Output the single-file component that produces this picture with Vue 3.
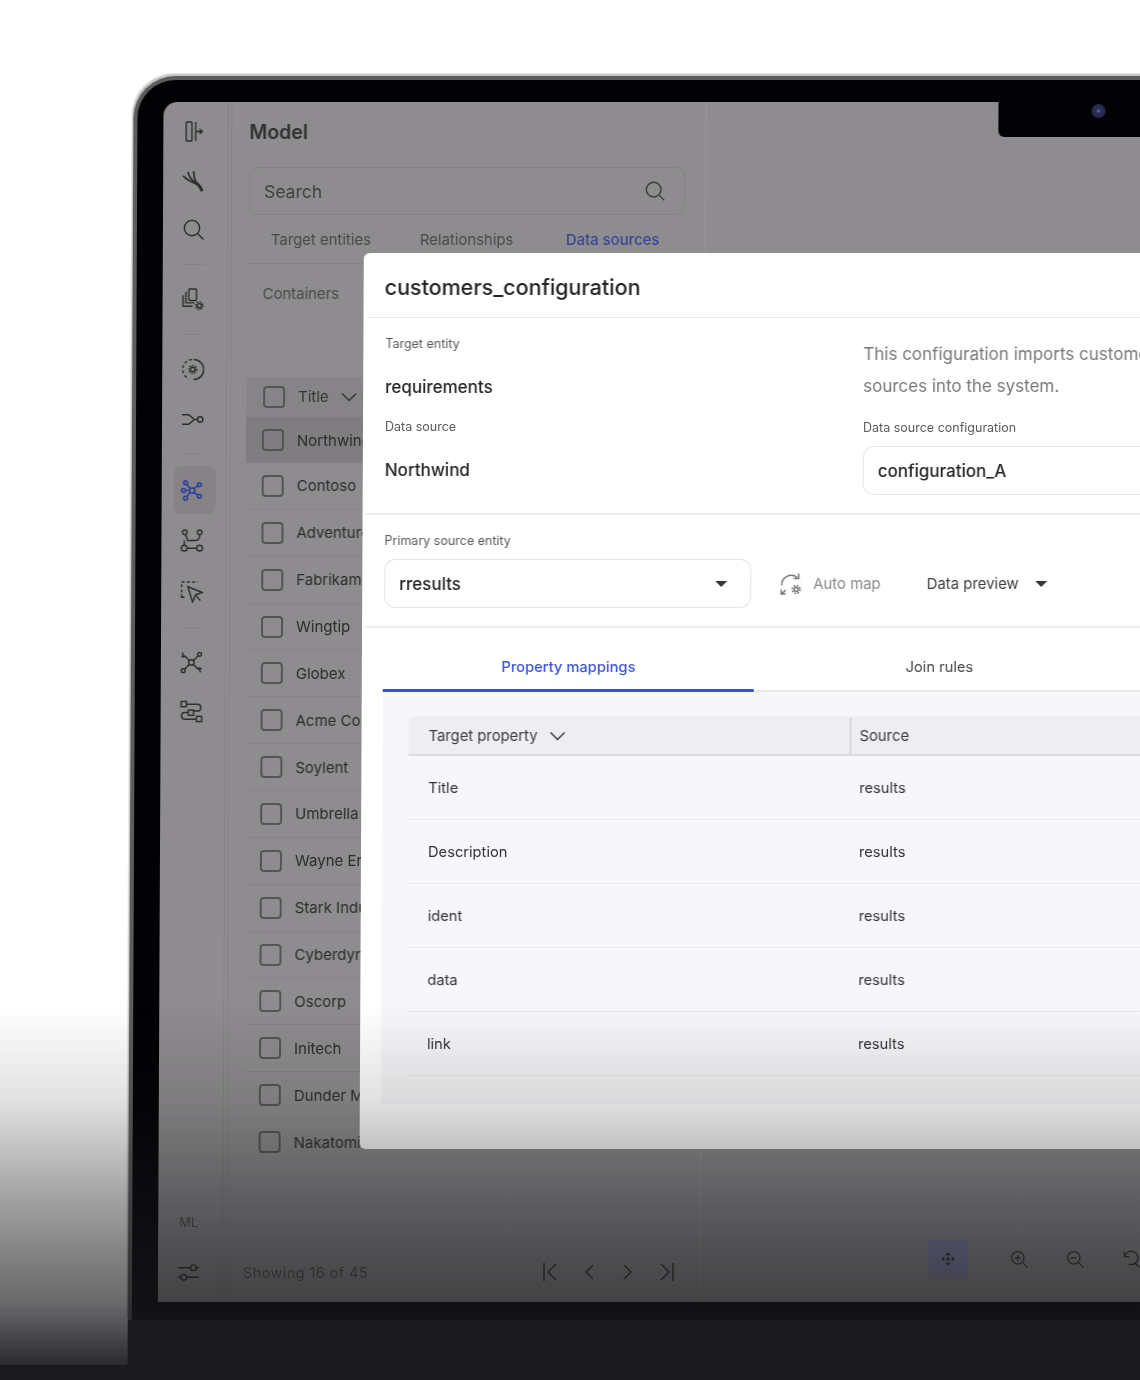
<script setup>
const companies = [
  'Northwind', 'Contoso', 'Adventure Works', 'Fabrikam', 'Wingtip', 'Globex', 'Acme Corp', 'Soylent',
  'Umbrella', 'Wayne Enterprises', 'Stark Industries', 'Cyberdyne', 'Oscorp', 'Initech', 'Dunder Mifflin', 'Nakatomi',
];
const mappings = ['Title', 'Description', 'ident', 'data', 'link'];
</script>

<template>
  <div class="page">
    <div class="laptop">
      <div class="bezel">
        <div class="screen">
          <aside class="rail">
            <div class="slot">
              <svg class="ico" viewBox="0 0 24 24"><rect x="4" y="2" width="6" height="20" rx="1" /><path d="M14 2v20M14 12h5" /><path class="solid" d="M18 8.500l4 3.500-4 3.500z" /></svg>
            </div>
            <div class="slot">
              <svg class="ico ico--fork" viewBox="0 0 24 24"><path d="M1 7c4 5 9 6 14 9M6 3c1 5 4 9 9 12M12 2c0 5 1 10 4 14" /><path class="heavy" d="M15 15c2 1 4 4 6 8" /></svg>
            </div>
            <div class="slot">
              <svg class="ico" viewBox="0 0 24 24"><circle cx="10.500" cy="10.500" r="8" /><path d="M16.500 16.500l6 6" /></svg>
            </div>
            <div class="sep" />
            <div class="slot">
              <svg class="ico" viewBox="0 0 24 24"><rect x="7.500" y="1" width="8" height="12" rx="1" /><path d="M4.500 4v11.500h9M1.500 7.500V19h10" /><circle cx="18.500" cy="18.500" r="2.200" /><circle class="teeth" cx="18.500" cy="18.500" r="3.800" /></svg>
            </div>
            <div class="sep" />
            <div class="slot">
              <svg class="ico" viewBox="0 0 24 24"><path stroke-dasharray="3 2.500" d="M11 1.500A10.500 10.500 0 0 0 8 21.700" /><path d="M13 1.500a10.500 10.500 0 0 1 0 21" /><circle cx="12" cy="12" r="2.400" /><circle class="teeth" cx="12" cy="12" r="4" /></svg>
            </div>
            <div class="slot slot--route">
              <svg class="ico" viewBox="0 0 24 24"><path d="M1 7h7l6 5-6 5H1M14 12h3" /><circle cx="20" cy="12" r="2.800" /></svg>
            </div>
            <div class="sep" />
            <div class="slot slot--wide slot--active">
              <svg class="ico ico--blue" viewBox="0 0 24 24"><rect x="9.500" y="9.500" width="5" height="5" /><path d="M9.500 9.500L6 5M14.500 9.500L18 7M14.500 14.500L18 17M9.500 14.500L6 19M9.500 12H5" /><circle cx="5" cy="4" r="2" /><circle cx="19.500" cy="6" r="2" /><circle cx="19.500" cy="18" r="2" /><circle cx="5" cy="20" r="2" /><circle cx="3" cy="12" r="2" /></svg>
            </div>
            <div class="slot slot--wide">
              <svg class="ico" viewBox="0 0 24 24"><circle cx="4.500" cy="3.500" r="2.400" /><circle cx="20" cy="3.500" r="2.400" /><circle cx="4" cy="20" r="3" /><circle cx="20" cy="20" r="3" /><path d="M5.500 6c1 3 2 6 2 6h8c3.500 0 4.500-3 4.500-6M4 12v5M7 20h10" /></svg>
            </div>
            <div class="slot slot--wide">
              <svg class="ico" viewBox="0 0 24 24"><path stroke-dasharray="3 2.500" d="M1.500 13V2h17" /><path d="M1.500 15v3h3" /><path d="M8 7l15 6-7 2.500L13 23z" /><path d="M16 15.500l5 6" /></svg>
            </div>
            <div class="sep" />
            <div class="slot">
              <svg class="ico" viewBox="0 0 24 24"><circle cx="12" cy="12" r="2.800" /><path d="M9.800 10L5 5M14.200 10L19 5M9.800 14L5 19M14.200 14L19 19" /><circle cx="20.500" cy="3.500" r="2" /><circle cx="3.500" cy="20.500" r="2" /><path d="M1.500 5a3 3 0 0 0 4 .5M3 1.500a3 3 0 0 0 2 4M22.500 19a3 3 0 0 0-4-.5M21 22.500a3 3 0 0 0-2-4" /></svg>
            </div>
            <div class="slot">
              <svg class="ico" viewBox="0 0 24 24"><rect x="1.500" y="1.500" width="5.500" height="5.500" /><rect x="9" y="10.500" width="5.500" height="5.500" /><rect x="17.500" y="17" width="5.500" height="5.500" /><path d="M7 4.500h12c4 0 4 7 0 7h-4.500M9 13H5c-4 0-4 7 0 7h12.500" /></svg>
            </div>
            <div class="rail__foot">
              <div class="slot slot--initials">ML</div>
              <div class="slot">
                <svg class="ico" viewBox="0 0 24 24"><path d="M1 7h13M20 7h3M1 17h3M10 17h13" /><circle cx="17" cy="7" r="3" /><circle cx="7" cy="17" r="3" /></svg>
              </div>
            </div>
          </aside>

          <section class="model">
            <h2 class="model__title">Model</h2>
            <div class="search">
              <span>Search</span>
              <svg class="ico ico--search" viewBox="0 0 24 24"><circle cx="10.500" cy="10.500" r="8" /><path d="M16.500 16.500L22 22" /></svg>
            </div>
            <nav class="tabs">
              <span class="tabs__item tabs__item--first">Target entities</span>
              <span class="tabs__item tabs__item--second">Relationships</span>
              <span class="tabs__item tabs__item--on">Data sources</span>
            </nav>
            <div class="subtab">Containers</div>

            <div class="list">
              <div class="list__head">
                <span class="check" />
                <span class="list__title">Title</span>
                <svg class="chev" viewBox="0 0 16 10"><path d="M1 1.500l7 7 7-7" /></svg>
              </div>
              <div
                v-for="(name, i) in companies"
                :key="name"
                :class="['list__row', { 'list__row--on': i === 0 }]"
              >
                <span class="check" />
                <span class="list__name">{{ name }}</span>
              </div>
            </div>

            <div class="pager">
              <span class="pager__count">Showing 16 of 45</span>
              <div class="pager__btns">
                <svg class="pg" viewBox="0 0 20 20"><path d="M3 1v18M15 2l-8 8 8 8" /></svg>
                <svg class="pg" viewBox="0 0 20 20"><path d="M14 3l-7 7 7 7" /></svg>
                <svg class="pg" viewBox="0 0 20 20"><path d="M6 3l7 7-7 7" /></svg>
                <svg class="pg" viewBox="0 0 20 20"><path d="M17 1v18M5 2l8 8-8 8" /></svg>
              </div>
            </div>
          </section>

          <section class="canvas">
            <div class="tools">
              <div class="tools__move">
                <svg class="move" viewBox="0 0 24 24"><path d="M12 4l3 3.500H9zM12 20l3-3.500H9zM4 12l3.500-3v6zM20 12l-3.500-3v6z" /><circle cx="12" cy="12" r="2" /></svg>
              </div>
              <svg class="tool" viewBox="0 0 24 24"><circle cx="10.500" cy="10.500" r="7.500" /><path d="M16 16l6 6M10.500 7v7M7 10.500h7" /></svg>
              <svg class="tool" viewBox="0 0 24 24"><circle cx="10.500" cy="10.500" r="7.500" /><path d="M16 16l6 6M7 10.500h7" /></svg>
              <svg class="tool" viewBox="0 0 24 24"><path d="M4 3v6h6M4.500 8.500A8 8 0 1 1 9 18M17 17l5 5" /></svg>
            </div>
          </section>

          <div class="notch"><span class="camera" /></div>

          <div class="dialog">
            <header class="dialog__head">customers_configuration</header>

            <div class="dialog__info">
              <div class="info__col">
                <span class="label">Target entity</span>
                <span class="value value--first">requirements</span>
                <span class="label label--second">Data source</span>
                <span class="value value--last">Northwind</span>
              </div>
              <div class="info__col info__col--right">
                <p class="info__text">This configuration imports customer data from external sources into the system.</p>
                <span class="label">Data source configuration</span>
                <div class="field field--config">configuration_A</div>
              </div>
            </div>

            <div class="dialog__source">
              <span class="label">Primary source entity</span>
              <div class="source__line">
                <div class="field field--select">
                  rresults
                  <i class="caret" />
                </div>
                <button class="action action--off">
                  <svg class="sync" viewBox="0 0 24 24"><path d="M2.500 13.500a9.500 9.500 0 0 1 15.500-8M19.500 1.500v5h-5M2 17.500V22h4.500M2.500 22l4-4" /><circle cx="17" cy="17.500" r="2" /><circle class="teeth" cx="17" cy="17.500" r="3.800" /></svg>
                  Auto map
                </button>
                <button class="action">
                  Data preview
                  <i class="caret caret--gap" />
                </button>
              </div>
            </div>

            <div class="dialog__tabs">
              <span class="dtab dtab--on">Property mappings</span>
              <span class="dtab">Join rules</span>
              <span class="dtab dtab--rest" />
            </div>

            <div class="dialog__body">
              <div class="grid">
                <div class="grid__head">
                  <div class="grid__cell grid__cell--target">
                    Target property
                    <svg class="chev chev--dark" viewBox="0 0 16 10"><path d="M1 1.500l7 7 7-7" /></svg>
                  </div>
                  <div class="grid__cell grid__cell--source">Source</div>
                </div>
                <div v-for="item in mappings" :key="item" class="grid__row">
                  <div class="grid__cell grid__cell--target">{{ item }}</div>
                  <div class="grid__cell grid__cell--result">results</div>
                </div>
              </div>
            </div>
          </div>
        </div>
      </div>
      <div class="base" />
    </div>

    <div class="shade" />
    <div class="ledge" />
  </div>
</template>

<style>
html,
body {
  margin: 0;
  background: #fff;
}
</style>

<style scoped>
.page {
  position: relative;
  width: 1140px;
  height: 1380px;
  overflow: hidden;
  background: #fff;
  font-family: Inter, "Liberation Sans", sans-serif;
}

.laptop {
  width: 1340px;
  padding: 76px 0 0 134px;
  transform: skewX(-0.27deg);
  transform-origin: 0 0;
  filter: blur(0.35px);
}

.bezel {
  padding: 22px 0 18px 26px;
  background: #020103;
  border: 4px solid #5c5b5d;
  border-right: 0;
  border-bottom: 0;
  border-radius: 42px 0 0 0;
  box-shadow: -1px -2px 0 #c4c4c5, -2px -3px 1px #e4e4e5;
  box-sizing: border-box;
  height: 1244px;
}

.screen {
  position: relative;
  display: flex;
  height: 1200px;
  background: #8e8c8e;
  border-radius: 14px 0 0 0;
  color: #353436;
}

.base {
  height: 60px;
  background: #1b1a1d;
}

/* left rail */
.rail {
  display: flex;
  flex-direction: column;
  align-items: center;
  width: 65px;
  padding: 5px 3px 5px 0;
  border-right: 1px solid #858385;
  box-sizing: border-box;
}

.slot {
  display: flex;
  align-items: center;
  justify-content: center;
  flex-shrink: 0;
  width: 42px;
  height: 49px;
}

.slot--route {
  margin: 1px 0 -1px;
}

.slot--wide {
  height: 51px;
}

.slot--active {
  height: 48px;
  margin: 2px 0 1px 5px;
  padding-right: 5px;
  box-sizing: border-box;
  border-radius: 8px;
  background: #858385;
}

.slot--initials {
  margin-bottom: 2px;
  font-size: 13px;
  color: #4a494b;
}

.sep {
  flex-shrink: 0;
  position: relative;
  width: 22px;
  height: 21px;
}

.sep::after {
  content: '';
  position: absolute;
  top: 10px;
  left: 0;
  right: 0;
  height: 1px;
  background: #858385;
}

.rail__foot {
  margin-top: auto;
}

.ico {
  width: 23px;
  height: 23px;
  fill: none;
  stroke: #2e2d2f;
  stroke-width: 1.500;
}

.ico--fork {
  stroke-width: 1.800;
}

.ico--blue {
  stroke: #2f419c;
  stroke-width: 1.800;
}

.ico--search {
  width: 22px;
  height: 22px;
  stroke: #3a393b;
  stroke-width: 1.500;
}

.solid {
  fill: #2e2d2f;
  stroke: none;
}

.heavy {
  stroke-width: 3;
}

.teeth {
  stroke-width: 1.800;
  stroke-dasharray: 1.500 1.490;
}

/* model panel */
.model {
  display: flex;
  flex-direction: column;
  width: 475px;
  flex-shrink: 0;
  padding: 0 0 0 17px;
  margin-left: 3px;
  border-left: 1px solid #858385;
  border-right: 1px solid #989698;
  box-sizing: border-box;
}

.model__title {
  margin: 18px 0 0;
  font-size: 19.500px;
  font-weight: 600;
  line-height: 24px;
  color: #2f2e30;
}

.search {
  display: flex;
  align-items: center;
  justify-content: space-between;
  width: 436px;
  height: 48px;
  margin-top: 23px;
  padding: 0 18px 0 14px;
  border: 1px solid #848284;
  border-radius: 9px;
  box-sizing: border-box;
  font-size: 17.500px;
  color: #403f41;
}

.tabs {
  position: relative;
  display: flex;
  width: 436px;
  height: 49px;
  padding: 2px 0 0 22px;
  border-bottom: 1px solid #848284;
  box-sizing: border-box;
  align-items: center;
  font-size: 14.900px;
  color: #49484a;
}

.tabs__item--first {
  width: 149px;
}

.tabs__item--second {
  width: 146px;
}

.tabs__item--on {
  color: #374596;
  font-weight: 500;
}

.subtab {
  margin: 20px 0 0 14px;
  font-size: 14.900px;
  line-height: 20px;
  color: #49484a;
}

.list {
  margin-top: 73px;
}

.list__head,
.list__row {
  display: flex;
  align-items: center;
  box-sizing: border-box;
  height: 46.870px;
  font-size: 15px;
  color: #2b2a2c;
  border-bottom: 1px solid #878587;
  margin-left: -2px;
  padding-left: 16px;
}

.list__row:last-child {
  border-bottom: 0;
}

.list__head {
  height: 40px;
  background: #868486;
  color: #333234;
  padding-left: 17px;
}

.list__row--on {
  height: 46px;
  background: #7f7d7f;
  border-bottom: 0;
}

.check {
  flex-shrink: 0;
  width: 18px;
  height: 18px;
  border: 2px solid #555456;
  border-radius: 4px;
  margin-right: 13px;
}

.list__name {
  white-space: nowrap;
}

.chev {
  width: 16px;
  height: 10px;
  margin-left: 12px;
  fill: none;
  stroke: #343335;
  stroke-width: 1.500;
}

.chev--dark {
  stroke: #3a393d;
}

.pager {
  display: flex;
  align-items: center;
  margin-top: auto;
  height: 60px;
}

.pager__count {
  margin-left: -1px;
  font-size: 14.500px;
  letter-spacing: 0.4px;
  color: #4f4e50;
}

.pager__btns {
  display: flex;
  gap: 18.500px;
  margin-left: 173px;
}

.pg {
  width: 20px;
  height: 20px;
  fill: none;
  stroke: #302f31;
  stroke-width: 1.500;
}

/* canvas on the right */
.canvas {
  flex: 1;
  display: flex;
  flex-direction: column;
  justify-content: flex-end;
}

.tools {
  display: flex;
  align-items: center;
  gap: 36px;
  padding: 0 0 24px 227px;
}

.tools__move {
  display: flex;
  align-items: center;
  justify-content: center;
  width: 40px;
  height: 38px;
  margin-right: 5px;
  background: #7e80a6;
}

.move {
  width: 20px;
  height: 20px;
  fill: #2a2a3c;
}

.tool {
  width: 20px;
  height: 20px;
  fill: none;
  stroke: #2c2b2d;
  stroke-width: 1.500;
}

.notch {
  position: absolute;
  top: 0;
  left: 835px;
  width: 400px;
  height: 35px;
  background: #020103;
  border-radius: 0 0 0 6px;
}

.camera {
  position: absolute;
  top: 2px;
  left: 93px;
  width: 14px;
  height: 14px;
  border-radius: 50%;
  background: radial-gradient(circle, #5a64b0 0 1px, #2c2e58 2px, #23244a 100%);
}

/* dialog over the dimmed app */
.dialog {
  position: absolute;
  top: 151px;
  left: 201px;
  width: 1000px;
  height: 896px;
  background: #fff;
  border-radius: 6px 0 0 6px;
  color: #232225;
}

.dialog__head {
  height: 65px;
  padding-left: 21px;
  border-bottom: 1px solid #eceaef;
  margin-left: 3px;
  padding-top: 19px;
  box-sizing: border-box;
  font-size: 21.500px;
  font-weight: 500;
  line-height: 30px;
  text-indent: -3px;
}

.dialog__info {
  display: flex;
  height: 197px;
  margin-left: 3px;
  border-bottom: 2px solid #eeedf0;
  box-sizing: border-box;
}

.info__col {
  display: flex;
  flex-direction: column;
  align-items: flex-start;
  width: 497px;
  padding: 18px 0 0 19px;
  box-sizing: border-box;
}

.info__col--right {
  width: 500px;
  padding: 20px 0 0 0;
}

.label {
  font-size: 12.500px;
  line-height: 16px;
  color: #59585c;
}

.label--second {
  margin-top: 21px;
}

.value {
  font-size: 17px;
  font-weight: 500;
  line-height: 22px;
  color: #232225;
}

.value--first {
  margin-top: 24px;
}

.value--last {
  margin-top: 24px;
}

.info__text {
  width: 470px;
  margin: 0 0 18px;
  font-size: 17px;
  line-height: 32px;
  color: #77767a;
}

.field {
  display: flex;
  align-items: center;
  height: 49px;
  border: 1px solid #e6e5e9;
  border-radius: 11px;
  box-sizing: border-box;
  font-size: 17px;
  font-weight: 500;
}

.field--config {
  width: 360px;
  margin-top: 10px;
  padding-left: 14px;
}

.dialog__source {
  height: 113px;
  margin-left: 3px;
  padding: 14px 0 0 19px;
  border-bottom: 2px solid #eeedf0;
  box-sizing: border-box;
}

.source__line {
  display: flex;
  align-items: center;
  margin-top: 10px;
}

.field--select {
  justify-content: space-between;
  width: 367px;
  padding: 0 23px 0 14px;
}

.caret {
  width: 0;
  height: 0;
  border-left: 6px solid transparent;
  border-right: 6px solid transparent;
  border-top: 6px solid #353438;
}

.caret--gap {
  margin-left: 16px;
}

.action {
  display: flex;
  align-items: center;
  padding: 0;
  border: 0;
  background: none;
  font: inherit;
  font-size: 14.900px;
  color: #3f3e42;
  margin-left: 46px;
}

.action--off {
  margin-left: 28px;
  color: #89888c;
}

.sync {
  width: 24px;
  height: 24px;
  margin-right: 10px;
  fill: none;
  stroke: #77767a;
  stroke-width: 1.500;
}

.dialog__tabs {
  display: flex;
  height: 64px;
  margin-left: 21px;
}

.dtab {
  display: flex;
  align-items: center;
  justify-content: center;
  width: 371px;
  padding-top: 16px;
  border-bottom: 2px solid #e8e7ea;
  box-sizing: border-box;
  font-size: 14.700px;
  color: #47464a;
}

.dtab--on {
  font-weight: 500;
  color: #3a52d0;
  border-bottom: 3px solid #3a52d0;
}

.dtab--rest {
  flex: 1;
}

.dialog__body {
  height: 412px;
  margin-left: 21px;
  padding: 24px 0 0 26px;
  background: #f7f6f8;
  box-sizing: border-box;
}

.grid__head {
  display: flex;
  align-items: center;
  height: 40px;
  padding-top: 1px;
  border-bottom: 2px solid #dcdbde;
  border-radius: 8px 0 0 0;
  background: #eeedf0;
  box-sizing: border-box;
  font-size: 14.800px;
  color: #3c3b3f;
}

.grid__row {
  display: flex;
  align-items: center;
  height: 64px;
  border-bottom: 1px solid #eceaee;
  box-sizing: border-box;
  font-size: 14.700px;
  color: #343337;
}

.grid__cell--target {
  display: flex;
  align-items: center;
  width: 441px;
  padding-left: 20px;
  box-sizing: border-box;
}

.grid__cell--source {
  height: 36px;
  display: flex;
  align-items: center;
  padding-left: 8px;
  border-left: 2px solid #d7d6d9;
}

.grid__cell--result {
  padding-left: 8px;
  margin-left: 2px;
}

/* fade to the dark keyboard deck */
.shade {
  position: absolute;
  top: 1005px;
  left: 0;
  width: 1140px;
  height: 360px;
  background: linear-gradient(
    180deg,
    rgba(27, 26, 29, 0) 0,
    rgba(27, 26, 29, 0.13) 95px,
    rgba(27, 26, 29, 0.27) 145px,
    rgba(27, 26, 29, 0.41) 195px,
    rgba(27, 26, 29, 0.56) 255px,
    rgba(27, 26, 29, 0.65) 297px,
    rgba(27, 26, 29, 0.93) 360px
  );
}

.ledge {
  position: absolute;
  top: 1365px;
  left: 0;
  width: 1140px;
  height: 15px;
  background: #1b1a1d;
}
</style>
